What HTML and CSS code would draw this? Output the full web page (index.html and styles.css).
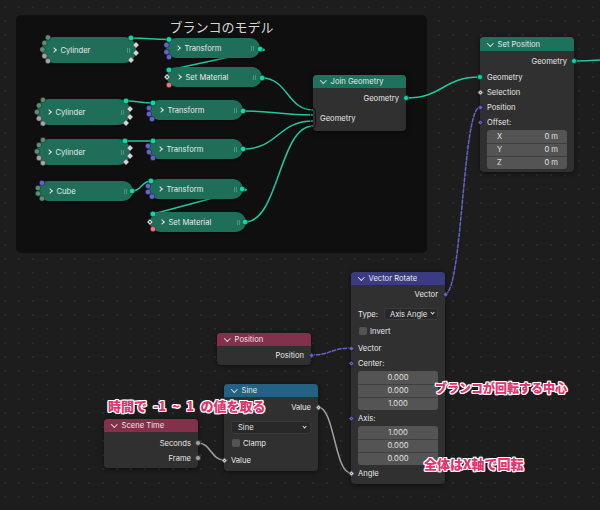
FILE: index.html
```html
<!DOCTYPE html>
<html lang="ja">
<head>
<meta charset="utf-8">
<title>Geometry Nodes</title>
<link rel="stylesheet" href="styles.css">
</head>
<body>
<div class="canvas">
  <div class="frame"><div class="frame-title">ブランコのモデル</div></div>

  <svg class="wires" width="600" height="510" viewBox="0 0 600 510">
    <g class="w-geo">
      <path d="M131,38 C150,38 150,39.5 169,39.5"/>
      <path d="M126,101 C140,101 139,103 153,103"/>
      <path d="M125,141 C139,141 139,141 153,141"/>
      <path d="M132,191 C142,191 141,181 151,181"/>
      <path d="M260,49 C266,49 266,50.8 258,50.8 L169,70"/>
      <path d="M242,189 C248,189 248,190.8 240,190.8 L153,214"/>
      <path d="M262,78 C287.5,78 287.5,110 313,110"/>
      <path d="M243,111 C278,111 278,115 313,115"/>
      <path d="M243,149 C278,149 278,121 313,121"/>
      <path d="M245,222 C279,222 279,126 313,126"/>
      <path d="M406,98 C443,98 443,77 480,77"/>
      <path d="M574,61 C600,61 605,59 640,58"/>
    </g>
    <g class="w-vec">
      <path d="M445,294 C462.5,294 462.5,107 480,107"/>
      <path d="M311,355 C331,355 331,348 351,348"/>
    </g>
    <g class="w-flt">
      <path d="M198,443 C211,443 211,460 224,460"/>
      <path d="M318,407 C334.5,407 334.5,473 351,473"/>
    </g>
  </svg>

  <!-- collapsed nodes inside the frame -->
  <div class="cnode tall" style="left:42px;top:37px;width:94px"><span class="arrow"></span>Cylinder<span class="grip"></span></div>
  <div class="cnode" style="left:166px;top:38px;width:94px"><span class="arrow"></span>Transform<span class="grip"></span></div>
  <div class="cnode" style="left:167px;top:67px;width:95px"><span class="arrow"></span>Set Material<span class="grip"></span></div>
  <div class="cnode tall" style="left:37px;top:99px;width:93px"><span class="arrow"></span>Cylinder<span class="grip"></span></div>
  <div class="cnode" style="left:149px;top:100px;width:94px"><span class="arrow"></span>Transform<span class="grip"></span></div>
  <div class="cnode tall" style="left:37px;top:139px;width:93px"><span class="arrow"></span>Cylinder<span class="grip"></span></div>
  <div class="cnode" style="left:148px;top:139px;width:95px"><span class="arrow"></span>Transform<span class="grip"></span></div>
  <div class="cnode" style="left:38px;top:181px;width:95px"><span class="arrow"></span>Cube<span class="grip"></span></div>
  <div class="cnode" style="left:148px;top:179px;width:95px"><span class="arrow"></span>Transform<span class="grip"></span></div>
  <div class="cnode" style="left:150px;top:212px;width:96px"><span class="arrow"></span>Set Material<span class="grip"></span></div>

  <!-- Join Geometry -->
  <div class="node" style="left:313px;top:75px;width:93px">
    <div class="hdr h-geo">Join Geometry</div>
    <div class="body pt25 pb55">
      <div class="row out">Geometry<i class="sk geo"></i></div>
      <div class="row mt5">Geometry<i class="sk multi"></i></div>
    </div>
  </div>

  <!-- Set Position -->
  <div class="node" style="left:480px;top:37px;width:94px">
    <div class="hdr h-geo tallhdr">Set Position</div>
    <div class="body pt25 pb35">
      <div class="row out">Geometry<i class="sk geo"></i></div>
      <div class="row mt1">Geometry<i class="sk geo"></i></div>
      <div class="row">Selection<i class="sk dia wht hollow"></i></div>
      <div class="row">Position<i class="sk dia vec"></i></div>
      <div class="row">Offset:<i class="sk dia vec hollow"></i></div>
      <div class="vfield">
        <div class="vrow"><span>X</span><span>0 m</span></div>
        <div class="vrow"><span>Y</span><span>0 m</span></div>
        <div class="vrow"><span>Z</span><span>0 m</span></div>
      </div>
    </div>
  </div>

  <!-- Vector Rotate -->
  <div class="node" style="left:351px;top:272px;width:94px">
    <div class="hdr h-vec">Vector Rotate</div>
    <div class="body pt15 pb35">
      <div class="row out">Vector<i class="sk dia vec"></i></div>
      <div class="row mt5">Type:<span class="drop narrow">Axis Angle<b class="dchev"></b></span></div>
      <div class="row mt2"><span class="check"></span>Invert</div>
      <div class="row mt2">Vector<i class="sk dia vec"></i></div>
      <div class="row">Center:<i class="sk dia vec hollow"></i></div>
      <div class="vfield center">
        <div class="vrow"><span>0.000</span></div>
        <div class="vrow"><span>0.000</span></div>
        <div class="vrow"><span>1.000</span></div>
      </div>
      <div class="row mt1">Axis:<i class="sk dia vec hollow"></i></div>
      <div class="vfield center">
        <div class="vrow"><span>1.000</span></div>
        <div class="vrow"><span>0.000</span></div>
        <div class="vrow"><span>0.000</span></div>
      </div>
      <div class="row mt1">Angle<i class="sk dia wht hollow"></i></div>
    </div>
  </div>

  <!-- Position -->
  <div class="node" style="left:217px;top:333px;width:94px">
    <div class="hdr h-in">Position</div>
    <div class="body pt15 pb25">
      <div class="row out">Position<i class="sk dia vec"></i></div>
    </div>
  </div>

  <!-- Sine -->
  <div class="node" style="left:224px;top:384px;width:94px">
    <div class="hdr h-conv">Sine</div>
    <div class="body pt25 pb35">
      <div class="row out">Value<i class="sk dia wht hollow"></i></div>
      <div class="row mt55"><span class="drop wide">Sine<b class="dchev"></b></span></div>
      <div class="row mt05"><span class="check"></span>Clamp</div>
      <div class="row mt2">Value<i class="sk dia wht hollow"></i></div>
    </div>
  </div>

  <!-- Scene Time -->
  <div class="node" style="left:104px;top:419px;width:94px">
    <div class="hdr h-in">Scene Time</div>
    <div class="body pt35 pb25">
      <div class="row out">Seconds<i class="sk flt"></i></div>
      <div class="row out">Frame<i class="sk flt"></i></div>
    </div>
  </div>

  <!-- sockets of collapsed nodes -->
  <svg class="sockets" width="600" height="510" viewBox="0 0 600 510">
    <g class="s-int">
      <circle cx="48" cy="37.5" r="2.7"/><circle cx="44.5" cy="43" r="2.7"/><circle cx="42.5" cy="49.5" r="2.7"/>
      <circle cx="43" cy="100" r="2.7"/><circle cx="39" cy="105.5" r="2.7"/><circle cx="37" cy="112" r="2.7"/>
      <circle cx="43" cy="140" r="2.7"/><circle cx="39" cy="145" r="2.7"/><circle cx="37" cy="151.5" r="2.7"/>
      <circle cx="38" cy="188" r="2.7"/><circle cx="38" cy="193.5" r="2.7"/><circle cx="42" cy="198.5" r="2.7"/>
    </g>
    <g class="s-flt">
      <circle cx="44.5" cy="56" r="2.7"/><circle cx="48" cy="61" r="2.7"/>
      <circle cx="39" cy="118.5" r="2.7"/><circle cx="43" cy="123.5" r="2.7"/>
      <circle cx="39" cy="158" r="2.7"/><circle cx="43" cy="163" r="2.7"/>
    </g>
    <g class="s-geo">
      <circle cx="131" cy="38" r="2.8"/><circle cx="169" cy="39.5" r="2.8"/><circle cx="260" cy="49" r="2.8"/>
      <circle cx="169" cy="70" r="2.8"/><circle cx="262" cy="78" r="2.8"/>
      <circle cx="126" cy="101" r="2.8"/><circle cx="153" cy="103" r="2.8"/><circle cx="243" cy="111" r="2.8"/>
      <circle cx="125" cy="141" r="2.8"/><circle cx="153" cy="141" r="2.8"/><circle cx="243" cy="149" r="2.8"/>
      <circle cx="132" cy="191" r="2.8"/><circle cx="151" cy="181" r="2.8"/><circle cx="242" cy="189" r="2.8"/>
      <circle cx="153" cy="214" r="2.8"/><circle cx="245" cy="222" r="2.8"/>
    </g>
    <g class="s-vec">
      <circle cx="166.5" cy="45" r="2.7"/><circle cx="166.5" cy="52" r="2.7"/><circle cx="169" cy="57" r="2.7"/>
      <circle cx="149" cy="108" r="2.7"/><circle cx="149" cy="114" r="2.7"/><circle cx="152" cy="119" r="2.7"/>
      <circle cx="148" cy="146" r="2.7"/><circle cx="149" cy="152" r="2.7"/><circle cx="153" cy="158" r="2.7"/>
      <circle cx="42" cy="183" r="2.7"/>
      <circle cx="148" cy="186" r="2.7"/><circle cx="148" cy="192" r="2.7"/><circle cx="152" cy="196.5" r="2.7"/>
    </g>
    <g class="s-mat">
      <circle cx="169" cy="85" r="2.7"/><circle cx="153" cy="229" r="2.7"/>
    </g>
    <g class="s-bool">
      <path d="M136,41.8 L139.2,45 L136,48.2 L132.8,45 Z"/><path d="M136,49.8 L139.2,53 L136,56.2 L132.8,53 Z"/><path d="M131,56.8 L134.2,60 L131,63.2 L127.8,60 Z"/>
      <path d="M130,105.8 L133.2,109 L130,112.2 L126.8,109 Z"/><path d="M130,113.8 L133.2,117 L130,120.2 L126.8,117 Z"/><path d="M126,119.8 L129.2,123 L126,126.2 L122.8,123 Z"/>
      <path d="M130,144.8 L133.2,148 L130,151.2 L126.8,148 Z"/><path d="M130,152.8 L133.2,156 L130,159.2 L126.8,156 Z"/><path d="M126,158.8 L129.2,162 L126,165.2 L122.8,162 Z"/>
      <path d="M167,73.8 L170.2,77 L167,80.2 L163.8,77 Z"/><path d="M150,218.8 L153.2,222 L150,225.2 L146.8,222 Z"/>
    </g>
    <g class="s-dot">
      <circle cx="167" cy="77" r="0.9"/><circle cx="150" cy="222" r="0.9"/>
    </g>
  </svg>

  <div class="note note-time">時間で -1 ~ 1 の値を取る</div>
  <div class="note note-center">ブランコが回転する中心</div>
  <div class="note note-axis">全体はX軸で回転</div>
</div>
</body>
</html>
```

FILE: styles.css
```css
* { box-sizing: border-box; margin: 0; padding: 0; }
html, body { width: 600px; height: 510px; overflow: hidden; background: #1d1d1d; }
body {
  font-family: Inter, "DejaVu Sans", sans-serif;
  font-size: 7.6px;
  color: #e8e8e8;
}
.canvas {
  position: relative;
  width: 600px;
  height: 510px;
  overflow: hidden;
  background-color: #1d1d1d;
  background-image: radial-gradient(circle at 1px 1px, #2c2c2c 0.9px, transparent 1.3px);
  background-size: 14px 14px;
  background-position: 4px 6px;
}

/* frame */
.frame {
  position: absolute;
  left: 16px; top: 15px;
  width: 411px; height: 238px;
  background: #0f0f0f;
  border-radius: 5px;
  display: flex;
  justify-content: center;
}
.frame-title {
  font-family: "Noto Sans CJK JP", sans-serif;
  font-size: 13px;
  line-height: 18px;
  color: #d6d6d6;
  margin-top: 3px;
}

/* wires */
.wires, .sockets { position: absolute; left: 0; top: 0; overflow: visible; }
.wires path { fill: none; stroke-width: 1.5; stroke-linecap: round; }
.w-geo path { stroke: #1fc99b; }
.w-vec path { stroke: #6464c8; stroke-dasharray: 3.5 2; }
.w-flt path { stroke: #a0a0a0; }

/* collapsed node sockets */
.sockets circle, .sockets path { stroke: rgba(0,0,0,0.55); stroke-width: 0.7; }
.s-int circle { fill: #5b8c74; }
.s-flt circle { fill: #a3a3a3; }
.s-geo circle { fill: #12d6a3; }
.s-vec circle { fill: #6565c9; }
.s-mat circle { fill: #eb7582; }
.s-bool path { fill: #d8d0da; }
.s-dot circle { fill: #303030; stroke: none; }

/* collapsed nodes */
.cnode {
  position: absolute;
  height: 20px;
  display: flex;
  align-items: center;
  padding-left: 11px;
  background: #1e6e5a;
  border-radius: 10px;
  color: #eaeaea;
  box-shadow: 0 1px 3px rgba(0,0,0,0.45);
  white-space: nowrap;
}
.cnode.tall { height: 26px; border-radius: 12px; }
.cnode .arrow {
  width: 4px; height: 4px;
  border-right: 1.1px solid #e6e6e6;
  border-bottom: 1.1px solid #e6e6e6;
  transform: rotate(-45deg);
  margin-right: 4.5px;
  margin-left: -1px;
}
.cnode .grip {
  margin-left: auto;
  margin-right: 6px;
  width: 3.5px; height: 5px;
  border-left: 1px solid #4f9682;
  border-right: 1px solid #4f9682;
}

/* expanded nodes */
.node {
  position: absolute;
  background: #303030;
  border-radius: 4px;
  box-shadow: 0 1px 5px rgba(0,0,0,0.5);
}
.hdr {
  height: 13px;
  display: flex;
  align-items: center;
  padding-left: 8px;
  border-radius: 4px 4px 0 0;
  color: #e8e8e8;
  white-space: nowrap;
}
.hdr.tallhdr { height: 14px; }
.hdr::before {
  content: "";
  width: 3.6px; height: 3.6px;
  border-right: 1.1px solid #e4e4e4;
  border-bottom: 1.1px solid #e4e4e4;
  transform: rotate(45deg);
  margin: -2px 5px 0 0;
}
.h-geo { background: #1d725e; }
.h-vec { background: #3b3b82; }
.h-in { background: #83314a; }
.h-conv { background: #246283; }

.body { display: flex; flex-direction: column; }
.pt15 { padding-top: 1.5px; }
.pt25 { padding-top: 2.5px; }
.pt35 { padding-top: 3.5px; }
.pb25 { padding-bottom: 2.5px; }
.pb35 { padding-bottom: 3.5px; }
.pb55 { padding-bottom: 5.5px; }
.mt05 { margin-top: 0.5px; }
.mt1 { margin-top: 1px; }
.mt2 { margin-top: 2px; }
.mt5 { margin-top: 5px; }
.mt55 { margin-top: 5.5px; }

.row {
  position: relative;
  height: 15px;
  display: flex;
  align-items: center;
  padding: 0 7px;
  white-space: nowrap;
}
.row.out { justify-content: flex-end; }

/* sockets */
.sk {
  position: absolute;
  left: -3px;
  top: 50%;
  width: 6px; height: 6px;
  margin-top: -3px;
  border-radius: 50%;
  border: 0.7px solid rgba(0,0,0,0.6);
}
.row.out .sk { left: auto; right: -3px; }
.sk.dia {
  width: 5px; height: 5px;
  margin-top: -2.5px;
  left: -2.5px;
  border-radius: 0.8px;
  transform: rotate(45deg);
}
.row.out .sk.dia { left: auto; right: -2.5px; }
.sk.hollow::after {
  content: "";
  position: absolute;
  left: 50%; top: 50%;
  width: 1.6px; height: 1.6px;
  margin: -0.8px 0 0 -0.8px;
  border-radius: 50%;
  background: #2a2a2a;
}
.sk.multi {
  width: 6px; height: 20px;
  margin-top: -10px;
  border-radius: 3px;
}
.geo { background: #12d6a3; }
.vec { background: #6565c9; }
.flt { background: #a3a3a3; }
.wht { background: #d6d6d6; }

/* vector fields */
.vfield {
  margin: 0 7px;
  border-radius: 3px;
  overflow: hidden;
  display: flex;
  flex-direction: column;
}
.vrow {
  height: 13px;
  background: #545454;
  display: flex;
  align-items: center;
  justify-content: space-between;
  padding: 0 9px 0 10px;
  color: #e0e0e0;
}
.vrow + .vrow { border-top: 1px solid #3f3f3f; }
.vfield.center .vrow { justify-content: center; padding: 0; }

/* dropdowns and checkboxes */
.drop {
  height: 12px;
  display: flex;
  align-items: center;
  justify-content: space-between;
  padding: 0 3px 0 5px;
  background: #282828;
  border: 0.8px solid #3a3a3a;
  border-radius: 3px;
  color: #e4e4e4;
}
.drop.narrow { margin-left: auto; width: 54px; letter-spacing: -0.1px; }
.drop.wide { width: 100%; height: 13px; padding: 0 4px 0 6px; }
.dchev {
  flex: none;
  width: 3.2px; height: 3.2px;
  border-right: 1px solid #d8d8d8;
  border-bottom: 1px solid #d8d8d8;
  transform: rotate(45deg);
  margin: -2px 0 0 3px;
}
.check {
  width: 8px; height: 8px;
  background: #545454;
  border-radius: 2px;
  margin: 0 3px 0 1px;
}

/* annotations */
.note {
  position: absolute;
  font-family: "Noto Sans CJK JP", sans-serif;
  font-weight: 900;
  line-height: 1;
  white-space: nowrap;
  color: #e6336e;
  text-shadow:
    1.2px 0 0 #fff, -1.2px 0 0 #fff, 0 1.2px 0 #fff, 0 -1.2px 0 #fff,
    1px 1px 0 #fff, -1px -1px 0 #fff, 1px -1px 0 #fff, -1px 1px 0 #fff;
}
.note-time { left: 108px; top: 399px; font-size: 13px; word-spacing: 3.2px; }
.note-center { left: 435px; top: 382px; font-size: 12px; }
.note-axis { left: 424px; top: 457px; font-size: 13px; }
```
